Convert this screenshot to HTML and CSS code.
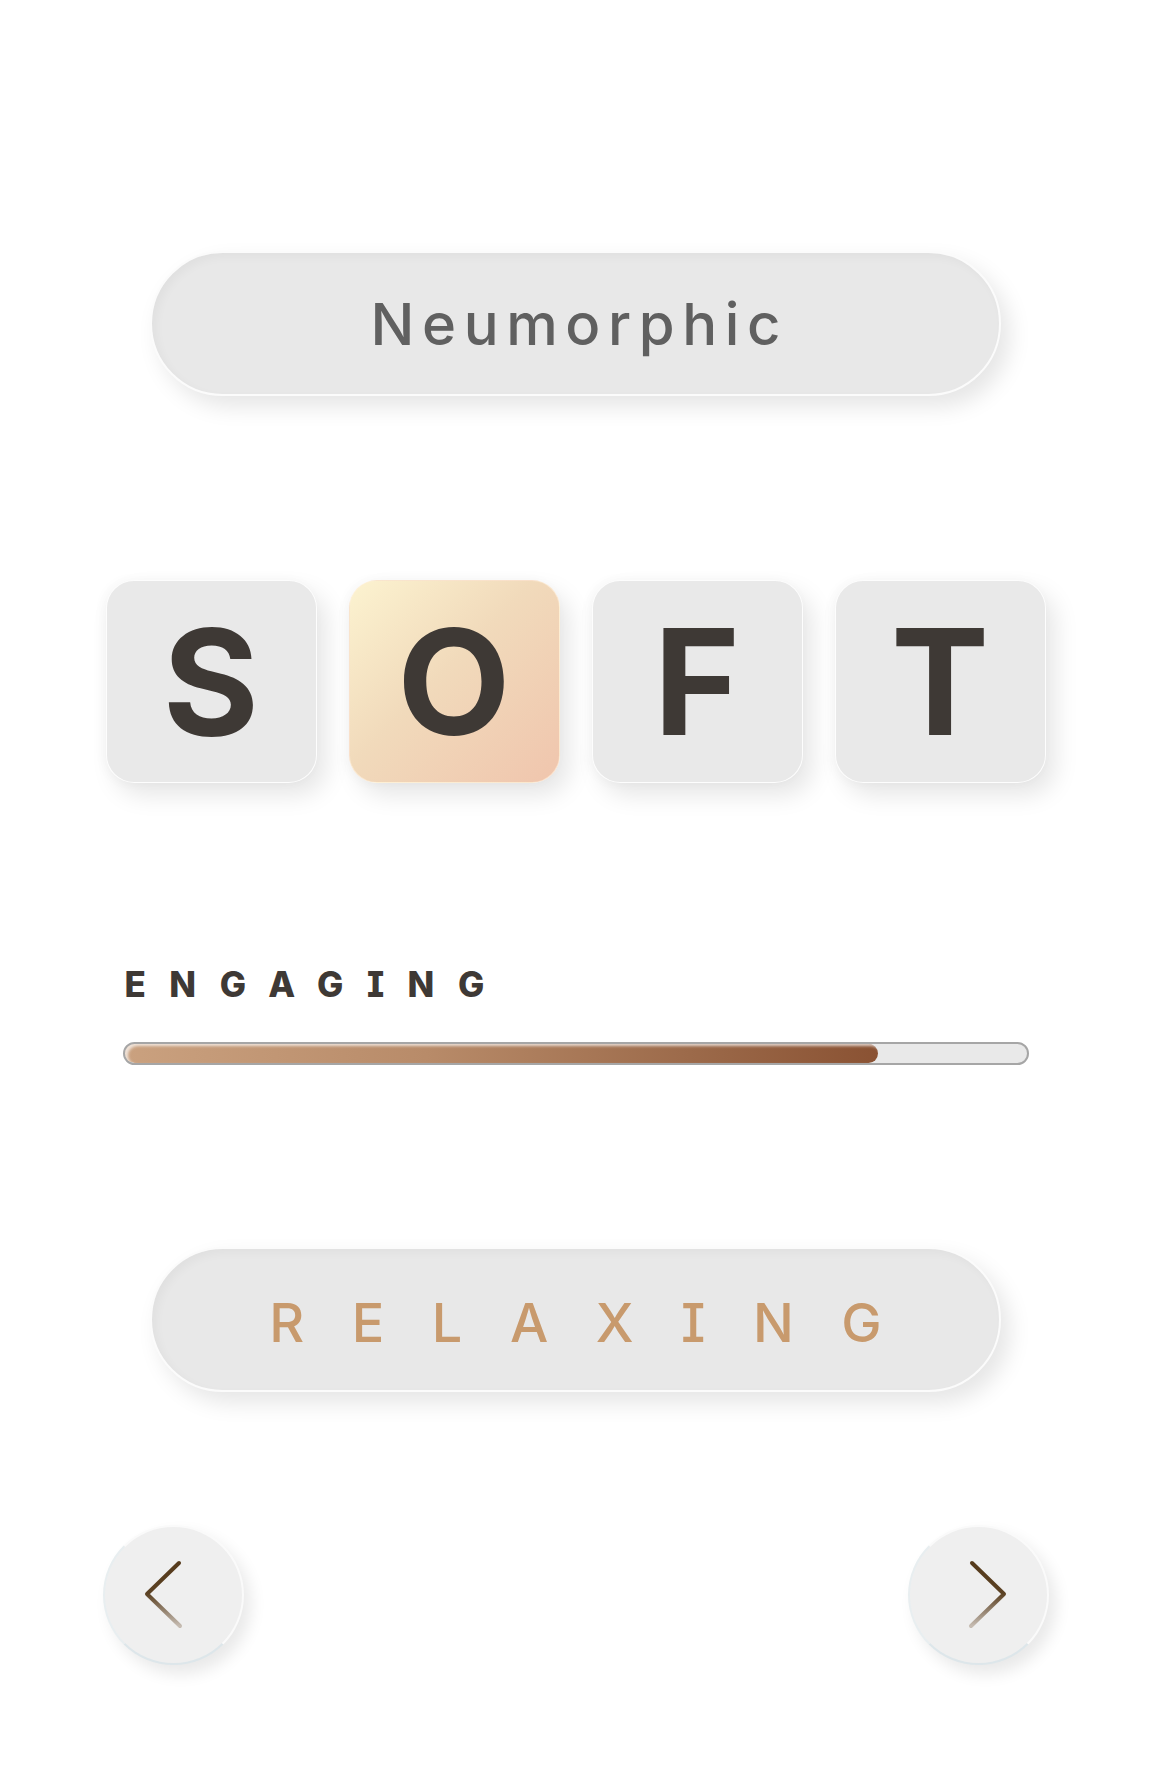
FILE: index.html
```html
<!DOCTYPE html>
<html lang="en">
<head>
<meta charset="utf-8">
<title>Neumorphic</title>
<link rel="stylesheet" href="styles.css">
</head>
<body>
<main class="screen">
  <div class="pill title"><span class="title-text">Neumorphic</span></div>

  <div class="tiles">
    <div class="tile">S</div>
    <div class="tile tile-active">O</div>
    <div class="tile">F</div>
    <div class="tile">T</div>
  </div>

  <section class="meter">
    <div class="meter-label">ENGAGING</div>
    <div class="track"><div class="fill" style="width:83.5%"></div></div>
  </section>

  <div class="pill mood"><span class="mood-text">RELAXING</span></div>

  <nav class="nav">
    <button class="round" aria-label="Previous">
      <svg class="chev" viewBox="0 0 140 140" width="140" height="140">
        <defs>
          <linearGradient id="gl" gradientUnits="userSpaceOnUse" x1="0" y1="37" x2="0" y2="101">
            <stop offset="0" stop-color="#553a1b"/>
            <stop offset="0.5" stop-color="#5c4224"/>
            <stop offset="1" stop-color="#c6bcb2"/>
          </linearGradient>
        </defs>
        <polyline points="76,38 44,69 77,101" fill="none" stroke="url(#gl)" stroke-width="4" stroke-linecap="round" stroke-linejoin="round"/>
      </svg>
    </button>
    <button class="round" aria-label="Next">
      <svg class="chev" viewBox="0 0 140 140" width="140" height="140">
        <defs>
          <linearGradient id="gr" gradientUnits="userSpaceOnUse" x1="0" y1="37" x2="0" y2="101">
            <stop offset="0" stop-color="#553a1b"/>
            <stop offset="0.5" stop-color="#5c4224"/>
            <stop offset="1" stop-color="#c6bcb2"/>
          </linearGradient>
        </defs>
        <polyline points="64,38 96,69 63,101" fill="none" stroke="url(#gr)" stroke-width="4" stroke-linecap="round" stroke-linejoin="round"/>
      </svg>
    </button>
  </nav>
</main>
</body>
</html>
```
FILE: styles.css
```css
* { box-sizing: border-box; }

html, body {
  margin: 0;
  padding: 0;
  background: #ffffff;
}

body {
  font-family: "Inter", "Lato", "DejaVu Sans", sans-serif;
}

.screen {
  width: 1151px;
  min-height: 1789px;
  padding-top: 251px;
  display: flex;
  flex-direction: column;
  align-items: center;
}

.pill {
  width: 851px;
  height: 145px;
  border-radius: 73px;
  background: #e8e8e8;
  border: 2px solid #fbfbfb;
  box-shadow: 9px 11px 22px rgba(0, 0, 0, 0.10),
              -6px -6px 14px #ffffff,
              inset 4px 4px 10px rgba(0, 0, 0, 0.035);
  display: flex;
  align-items: center;
  justify-content: center;
}

.title-text {
  font-size: 58px;
  font-weight: 500;
  color: #606060;
  letter-spacing: 7.6px;
  padding-left: 7.6px;
}

.tiles {
  margin-top: 184px;
  width: 940px;
  display: grid;
  grid-template-columns: repeat(4, 211px);
  column-gap: 32px;
}

.tile {
  height: 203px;
  border-radius: 28px;
  background: #e9e9e9;
  border: 1px solid rgba(255, 255, 255, 0.9);
  box-shadow: 9px 12px 24px rgba(0, 0, 0, 0.10),
              -3px 0 12px rgba(0, 0, 0, 0.03),
              -6px -6px 14px #ffffff;
  display: flex;
  align-items: center;
  justify-content: center;
  font-size: 147px;
  font-weight: 700;
  color: #3e3935;
  line-height: 1;
}

.tile-active {
  background: linear-gradient(135deg, #fcf3d0 0%, #f1dabb 45%, #f0c5ad 100%);
  border-color: rgba(255, 240, 220, 0.6);
}

.meter {
  margin-top: 184px;
  width: 906px;
}

.meter-label {
  font-size: 35px;
  line-height: 35px;
  font-weight: 800;
  color: #3e3935;
  letter-spacing: 23.5px;
  padding-left: 2px;
  font-feature-settings: "cv08" 1;
}

.track {
  margin-top: 40px;
  height: 23px;
  border: 2px solid #a6a6a6;
  border-radius: 12px;
  background: #e9e9e9;
  overflow: hidden;
}

.fill {
  height: 100%;
  border-radius: 10px;
  background: linear-gradient(90deg, #caa17f 0%, #b88b69 40%, #9c6a4a 75%, #8a5233 100%);
  box-shadow: inset 3px 2px 3px rgba(255, 255, 255, 0.7);
}

.mood {
  margin-top: 182px;
  padding-top: 5px;
}

.mood-text {
  font-size: 54px;
  font-weight: 500;
  color: #c89a6d;
  letter-spacing: 47.5px;
  padding-left: 47.5px;
  font-feature-settings: "cv08" 1;
}

.nav {
  margin-top: 133px;
  width: 946px;
  display: flex;
  justify-content: space-between;
}

.round {
  width: 141px;
  height: 140px;
  padding: 0;
  border-radius: 50%;
  background: #efefef;
  border: 2px solid #fafafa;
  border-bottom-color: #dde6ea;
  border-left-color: #e8eef0;
  box-shadow: 7px 9px 16px rgba(0, 0, 0, 0.09),
              -5px -5px 12px #ffffff;
  display: flex;
  align-items: center;
  justify-content: center;
  cursor: pointer;
}

.chev {
  display: block;
  flex: none;
}
```
